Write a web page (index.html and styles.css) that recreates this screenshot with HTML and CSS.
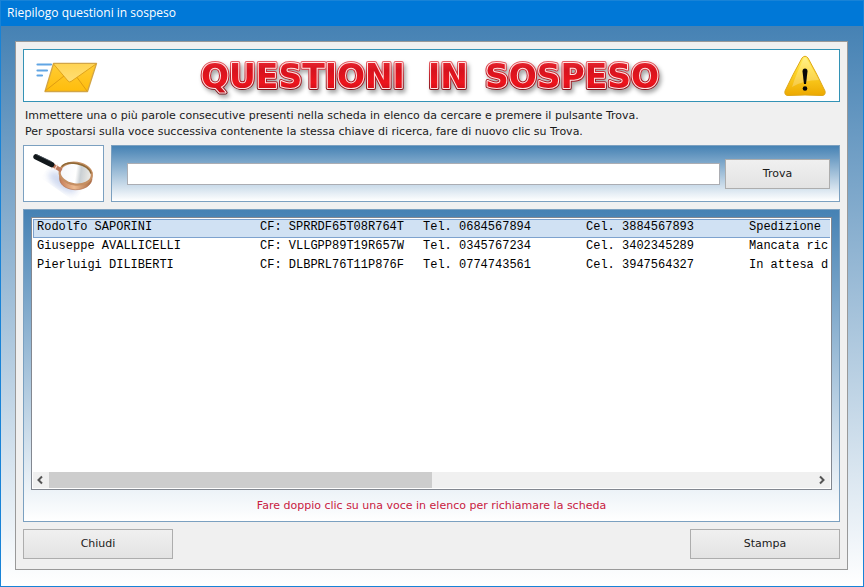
FILE: index.html
```html
<!DOCTYPE html>
<html lang="it">
<head>
<meta charset="utf-8">
<meta name="viewport" content="width=device-width, initial-scale=1">
<title>Riepilogo questioni in sospeso</title>
<link rel="stylesheet" href="styles.css">
</head>
<body>
<div class="window">
  <header class="titlebar">Riepilogo questioni in sospeso</header>
  <main class="panel">
    <div class="banner">
      <svg class="mail" viewBox="0 0 62 32" aria-hidden="true">
        <defs>
          <linearGradient id="paper" x1="0" y1="0" x2="0" y2="1"><stop offset="0" stop-color="#ffcc35"/><stop offset="1" stop-color="#ffbd0b"/></linearGradient>
          <linearGradient id="flap" x1="0" y1="0" x2="0" y2="1"><stop offset="0" stop-color="#ffd454"/><stop offset="1" stop-color="#ffdf76"/></linearGradient>
        </defs>
        <path d="M1.500 2.500H15M1.500 8.500H11M1.500 13.500H6" stroke="#61a5e4" stroke-width="2.200" stroke-linecap="round"/>
        <path d="M17.500 1.500H60.500L51.500 29.500H9Z" fill="url(#paper)" stroke="#d2a546" stroke-width="1.300" stroke-linejoin="round"/>
        <path d="M9 29L28 14M51 29L40 14" stroke="#df9c12" fill="none"/>
        <path d="M17.500 2H60L35 19.500Q33 20.500 32 19Z" fill="url(#flap)"/>
        <path d="M17.500 2L32 19Q33 20.500 35 19.500L60 2" stroke="#e0a31b" fill="none"/>
      </svg>
      <h1 class="heading">
        <svg class="wordart" viewBox="0 0 466 42" role="img" aria-label="Questioni in sospeso">
          <defs>
            <linearGradient id="rim" x1="0" y1="0" x2="0" y2="1"><stop offset="0" stop-color="#f1777b"/><stop offset=".45" stop-color="#c51f29"/><stop offset="1" stop-color="#681017"/></linearGradient>
            <linearGradient id="red" x1="0" y1="0" x2="0" y2="1"><stop offset="0" stop-color="#ef3039"/><stop offset=".35" stop-color="#d7131e"/><stop offset=".65" stop-color="#ed151d"/><stop offset="1" stop-color="#b70d18"/></linearGradient>
          </defs>
          <use href="#words" class="rim"/>
          <use href="#words" class="shine"/>
          <g class="core"><g id="words">
            <text x="2" y="33">QUESTIONI</text>
            <text x="229" y="33">IN</text>
            <text x="286" y="33">SOSPESO</text>
          </g></g>
        </svg>
      </h1>
      <svg class="warning" viewBox="0 0 44 42" aria-hidden="true">
        <defs><linearGradient id="amber" x1="0" y1="0" x2="0" y2="1"><stop offset="0" stop-color="#fff06b"/><stop offset=".35" stop-color="#ffd82b"/><stop offset="1" stop-color="#eda900"/></linearGradient></defs>
        <path d="M19 3Q22-.5 25 3Q34 19 42 36Q43 41 38 40.500Q22 39.500 6 40.500Q1 41 2 36Q10 19 19 3Z" fill="url(#amber)" stroke="#dfa819"/>
        <path d="M21 3Q22 2 23 3Q33 19 36 25Q21 25 9 32Q13 19 21 3Z" fill="#fff" opacity=".24"/>
        <path d="M19.500 16.500Q19.500 13.500 22 13.500Q24.500 13.500 24.500 16.500L23 29H21Z" fill="#080808"/>
        <circle cx="22" cy="33.500" r="2.300" fill="#080808"/>
      </svg>
    </div>

    <p class="instructions">Immettere una o più parole consecutive presenti nella scheda in elenco da cercare e premere il pulsante Trova.<br>Per spostarsi sulla voce successiva contenente la stessa chiave di ricerca, fare di nuovo clic su Trova.</p>

    <div class="search">
      <div class="lens">
        <svg viewBox="0 0 80 56" aria-hidden="true">
          <defs>
            <linearGradient id="glass"><stop offset="0" stop-color="#f4f6fb"/><stop offset=".5" stop-color="#fff"/><stop offset=".65" stop-color="#c9cfd3"/><stop offset="1" stop-color="#f1eee8"/></linearGradient>
            <linearGradient id="copper"><stop offset="0" stop-color="#c47c58"/><stop offset=".45" stop-color="#edbb91"/><stop offset="1" stop-color="#a96a41"/></linearGradient>
            <filter id="soft"><feGaussianBlur stdDeviation="3"/></filter>
          </defs>
          <ellipse cx="39" cy="37" rx="17" ry="7" transform="rotate(35 39 37)" fill="#b6c5e8" opacity=".65" filter="url(#soft)"/>
          <path d="M36 26V34C38 48 67 48 69 34V27C65 44 39 44 36 26Z" fill="url(#copper)" stroke="#ad6b49" stroke-width=".600"/>
          <ellipse cx="52.500" cy="28" rx="16.500" ry="11" transform="rotate(8 52 28)" fill="url(#glass)" stroke="#c58f62" stroke-width="2.200"/>
          <path d="M38 21C44 14 65 18 68 28" stroke="#8d6836" stroke-width="1.500" fill="none"/>
          <path d="M28 19L38 25" stroke="#bd795c" stroke-width="4"/>
          <path d="M30 17L28 23M34 19L31 24" stroke="#f5d5c7" stroke-width="1.200"/>
          <path d="M12 11L28 19" stroke="#11171b" stroke-width="5.500" stroke-linecap="round"/>
          <path d="M13 9L28 16" stroke="#4c5660" stroke-width=".800"/>
        </svg>
      </div>
      <form class="searchbar" onsubmit="return false">
        <input class="query" type="text" aria-label="Parole da cercare">
        <button class="button find" type="submit">Trova</button>
      </form>
    </div>

    <section class="results">
      <div class="listbox">
        <div class="rows">
          <table aria-label="Questioni in sospeso">
            <colgroup><col class="c-name"><col class="c-code"><col class="c-phone"><col class="c-phone"><col class="c-note"></colgroup>
            <tbody>
              <tr class="selected"><td>Rodolfo SAPORINI</td><td>CF: SPRRDF65T08R764T</td><td>Tel. 0684567894</td><td>Cel. 3884567893</td><td>Spedizione</td></tr>
              <tr><td>Giuseppe AVALLICELLI</td><td>CF: VLLGPP89T19R657W</td><td>Tel. 0345767234</td><td>Cel. 3402345289</td><td>Mancata ric</td></tr>
              <tr><td>Pierluigi DILIBERTI</td><td>CF: DLBPRL76T11P876F</td><td>Tel. 0774743561</td><td>Cel. 3947564327</td><td>In attesa d</td></tr>
            </tbody>
          </table>
        </div>
        <div class="scrollbar">
          <button class="arrow" type="button" aria-label="Scorri a sinistra"><svg viewBox="0 0 16 16"><path d="M9 4.500L5.500 8L9 11.500"/></svg></button>
          <div class="track"><div class="thumb"></div></div>
          <button class="arrow" type="button" aria-label="Scorri a destra"><svg viewBox="0 0 16 16"><path d="M6 4.500L9.500 8L6 11.500"/></svg></button>
        </div>
      </div>
      <p class="hint">Fare doppio clic su una voce in elenco per richiamare la scheda</p>
    </section>

    <footer class="actions">
      <button class="button" type="button">Chiudi</button>
      <button class="button" type="button">Stampa</button>
    </footer>
  </main>
</div>
</body>
</html>
```
FILE: styles.css
```css
* { box-sizing: border-box; }

body {
  margin: 0;
  font: 11px/16px "DejaVu Sans", Verdana, sans-serif;
  color: #1a1a1a;
}

.window {
  display: flex;
  flex-direction: column;
  min-height: 100vh;
  border: 1px solid #1883d7;
  background: linear-gradient(#4682b4 26px, #fff);
}

.titlebar {
  height: 25px;
  padding-left: 6px;
  background: #0078d7;
  color: #fff;
  font: 12px/24px "Open Sans", "Segoe UI", sans-serif;
}

.panel {
  flex: 1;
  display: flex;
  flex-direction: column;
  margin: 15px 15px 16px 14px;
  padding: 7px 7px 10px;
  border: 1px solid #999;
  background: #f0f0f0;
}

.banner {
  display: grid;
  grid-template-columns: 1fr auto 1fr;
  align-items: center;
  height: 53px;
  padding: 0 12px;
  border: 1px solid #3392b5;
  background: #fff;
}

.mail { width: 62px; height: 32px; margin-top: 4px; }
.warning { width: 44px; height: 42px; justify-self: end; }

.heading { margin: 0; height: 42px; }

.wordart {
  display: block;
  width: 466px;
  height: 42px;
  overflow: visible;
  font: bold 33px "DejaVu Sans", sans-serif;
  stroke-linejoin: round;
  filter: drop-shadow(2px 3px 2px rgba(0, 0, 0, .35));
}

.rim { fill: url(#rim); stroke: url(#rim); stroke-width: 4px; }
.shine { fill: #ffe5e5; stroke: #ffe5e5; stroke-width: 2px; }
.core { fill: url(#red); }

.instructions { margin: 6px 2px 5px; }

.search {
  display: flex;
  gap: 7px;
  height: 57px;
}

.lens {
  width: 81px;
  border: 1px solid #7ba0c0;
  background: #fff;
}

.lens svg { display: block; width: 100%; height: 100%; }

.searchbar {
  flex: 1;
  display: flex;
  align-items: center;
  gap: 5px;
  padding: 0 9px 0 15px;
  border: 1px solid #7ba0c0;
  background: linear-gradient(#4682b4, #fff);
}

.query {
  flex: 1;
  min-width: 0;
  height: 22px;
  padding: 0 4px;
  border: 1px solid #abadb3;
  background: #fff;
  font: inherit;
}

.button {
  width: 150px;
  height: 30px;
  padding: 0;
  border: 1px solid #adadad;
  background: linear-gradient(#f0f0f0, #e3e3e3);
  color: #1a1a1a;
  font: inherit;
}

.find { width: 105px; }

.results {
  flex: 1;
  display: flex;
  flex-direction: column;
  margin: 7px 0;
  padding: 7px 7px 0;
  border: 1px solid #7ba0c0;
  background: linear-gradient(#4682b4, #fff);
}

.listbox {
  flex: 1;
  display: flex;
  flex-direction: column;
  padding: 1px;
  border: 1px solid #828790;
  background: #fff;
}

.rows { flex: 1; overflow: hidden; }

table {
  width: 100%;
  table-layout: fixed;
  border-collapse: separate;
  border-spacing: 0;
  font: 12px/15px "Liberation Mono", "Courier New", monospace;
  color: #000;
}

.c-name { width: 223px; }
.c-code,
.c-phone { width: 163px; }

td {
  height: 19px;
  padding: 0 0 2px 4px;
  border: solid transparent;
  border-width: 1px 0;
  white-space: nowrap;
  overflow: hidden;
}

.selected td { border-color: #7da2ce; background: #d0e1f3; }
.selected td:first-child { padding-left: 3px; border-left: 1px solid #7da2ce; }

.scrollbar {
  display: flex;
  height: 16px;
  background: #f0f0f0;
}

.arrow {
  width: 16px;
  padding: 0;
  border: 0;
  background: #f0f0f0;
}

.arrow svg {
  display: block;
  width: 16px;
  height: 16px;
  fill: none;
  stroke: #555;
  stroke-width: 2px;
}

.track { flex: 1; }
.thumb { width: 50%; height: 100%; background: #cdcdcd; }

.hint {
  margin: 0;
  padding: 8px 0 7px;
  text-align: center;
  color: #c8203f;
}

.actions { display: flex; justify-content: space-between; }
```
